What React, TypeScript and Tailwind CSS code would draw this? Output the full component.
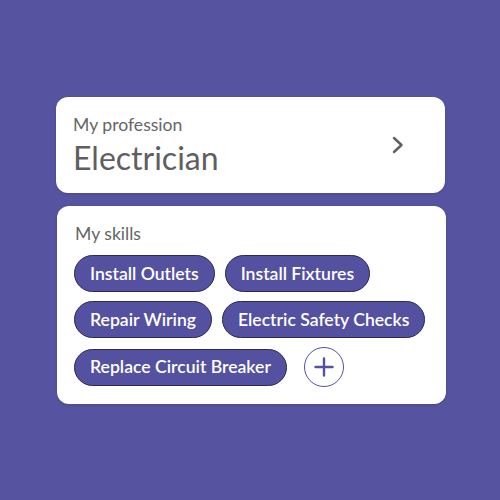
import React from "react";

const skills = [
  ["Install Outlets", "Install Fixtures"],
  ["Repair Wiring", "Electric Safety Checks"],
];

function Chip({ label }: { label: string }) {
  return (
    <span className="h-[37px] px-[15px] rounded-full bg-[#5451a0] border border-[#2c2a55] text-white text-[17.6px] font-semibold flex items-center whitespace-nowrap leading-none">
      {label}
    </span>
  );
}

export default function App() {
  return (
    <div
      className="w-[500px] h-[500px] bg-[#5654a0] flex flex-col pt-[97px] pl-[56px]"
      style={{ fontFamily: "Lato, 'Noto Sans', sans-serif" }}
    >
      <div className="w-[389px] h-[96px] bg-white rounded-[12px] flex items-center justify-between pl-[17px] pr-[40px] shadow-[0_1px_3px_rgba(0,0,0,0.15)]">
        <div className="flex flex-col">
          <span className="text-[17.6px] text-[#666666] leading-[22px]">My profession</span>
          <span className="text-[32px] text-[#5f5f5f] leading-[38px] mt-[3px]">Electrician</span>
        </div>
        <svg width="14" height="18" viewBox="0 0 14 18" fill="none">
          <path d="M3 2 L10.5 9 L3 16" stroke="#5f5f5f" strokeWidth="2.4" strokeLinecap="round" strokeLinejoin="round" />
        </svg>
      </div>
      <div className="w-[389px] mt-[13px] ml-[1px] bg-white rounded-[12px] pt-[17px] pb-[17px] px-[17px] shadow-[0_1px_3px_rgba(0,0,0,0.15)]">
        <div className="text-[17.6px] text-[#666666] leading-[22px] pl-[1px]">My skills</div>
        <div className="flex flex-col gap-[9px] mt-[10px]">
          {skills.map((row, i) => (
            <div key={i} className="flex gap-[10px]">
              {row.map((s) => (
                <Chip key={s} label={s} />
              ))}
            </div>
          ))}
          <div className="flex items-center gap-[17px]">
            <Chip label="Replace Circuit Breaker" />
            <div className="w-[40px] h-[40px] rounded-full border-[1.5px] border-[#5451a0] flex items-center justify-center">
              <svg width="20" height="20" viewBox="0 0 20 20">
                <path d="M10 1.5 V18.5 M1.5 10 H18.5" stroke="#5451a0" strokeWidth="2.4" strokeLinecap="round" />
              </svg>
            </div>
          </div>
        </div>
      </div>
    </div>
  );
}
